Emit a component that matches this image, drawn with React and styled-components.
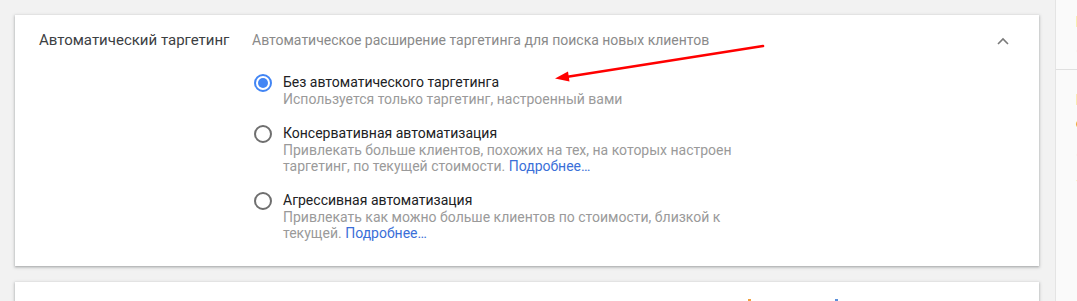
import React, { useState } from "react";
import styled, { createGlobalStyle } from "styled-components";

const GlobalStyle = createGlobalStyle`
  html, body {
    margin: 0;
    padding: 0;
    background: #f2f2f2;
    overflow: hidden;
    font-family: Roboto, "Liberation Sans", Arial, sans-serif;
  }
`;

const Page = styled.div`
  display: flex;
  height: 301px;
  width: 1077px;
`;

const Main = styled.main`
  width: 1055px;
  flex: none;
  box-sizing: border-box;
  padding: 15px 16px 0 15px;
  display: flex;
  flex-direction: column;
  gap: 16px;
`;

const Card = styled.section`
  position: relative;
  background: #fff;
  box-shadow: 0 1px 2px rgba(60, 64, 67, 0.3), 0 1px 3px 1px rgba(60, 64, 67, 0.15);
`;

const Section = styled.div`
  display: grid;
  grid-template-columns: 213px 1fr auto;
  padding: 15px 30px 25px 24px;
`;

const Title = styled.h2`
  margin: 0;
  font-size: 15px;
  line-height: 20px;
  font-weight: 400;
  color: #3c4043;
`;

const Body = styled.div`
  display: flex;
  flex-direction: column;
`;

const Subtitle = styled.p`
  margin: 0;
  font-size: 14px;
  line-height: 20px;
  color: #8a8a8a;
`;

const Options = styled.div`
  margin-top: 24px;
  display: flex;
  flex-direction: column;
  gap: 18px;
  padding-left: 2px;
`;

const Option = styled.label`
  display: flex;
  align-items: flex-start;
  gap: 11px;
  cursor: pointer;
`;

const Radio = styled.span`
  flex: none;
  width: 18px;
  height: 18px;
  box-sizing: border-box;
  border-radius: 50%;
  border: 2px solid ${({ $checked }) => ($checked ? "#4285f4" : "#6f6f6f")};
  display: flex;
  align-items: center;
  justify-content: center;

  &::after {
    content: "";
    width: 10px;
    height: 10px;
    border-radius: 50%;
    background: #4285f4;
    display: ${({ $checked }) => ($checked ? "block" : "none")};
  }
`;

const OptionText = styled.div`
  max-width: 482px;
`;

const OptionLabel = styled.div`
  font-size: 14px;
  line-height: 17px;
  color: #202124;
`;

const OptionHint = styled.div`
  font-size: 14px;
  line-height: 16px;
  color: #9a9a9a;
`;

const MoreLink = styled.a`
  color: #3b6fd8;
  text-decoration: none;
`;

const Collapse = styled.button`
  border: 0;
  background: none;
  padding: 0;
  margin-top: 7px;
  width: 12px;
  height: 8px;
  display: flex;
  cursor: pointer;
`;

// red annotation arrow drawn over the card
const Arrow = styled.svg`
  position: absolute;
  left: 525px;
  top: 10px;
  pointer-events: none;
`;

const NextCard = styled(Card)`
  height: 40px;
  display: flex;
  gap: 84px;
  padding: 17px 0 0 733px;
  box-sizing: border-box;
`;

const Mark = styled.span`
  width: 3px;
  height: 6px;
  background: ${({ $color }) => $color};
`;

const Sidebar = styled.aside`
  flex: 1;
  overflow: hidden;
  background: #fafafa;
  border-left: 1px solid #e4e4e4;
`;

const SideBlock = styled.div`
  height: ${({ $h }) => $h}px;
  box-sizing: border-box;
  padding: ${({ $pt }) => $pt}px 0 0 20px;
  border-bottom: ${({ $line }) => ($line ? "1px solid #e0e0e0" : "0")};
  display: flex;
  flex-direction: column;
  gap: ${({ $gap }) => $gap}px;
`;

const SideText = styled.span`
  font-size: 14px;
  line-height: ${({ $lh }) => $lh || 14}px;
  white-space: nowrap;
  color: ${({ $color }) => $color};
  font-weight: ${({ $bold }) => ($bold ? 500 : 400)};
`;

const options = [
  {
    id: "none",
    label: "Без автоматического таргетинга",
    hint: "Используется только таргетинг, настроенный вами",
  },
  {
    id: "conservative",
    label: "Консервативная автоматизация",
    hint: "Привлекать больше клиентов, похожих на тех, на которых настроен таргетинг, по текущей стоимости.",
    more: true,
  },
  {
    id: "aggressive",
    label: "Агрессивная автоматизация",
    hint: "Привлекать как можно больше клиентов по стоимости, близкой к текущей.",
    more: true,
  },
];

export default function App() {
  const [value, setValue] = useState("none");

  return (
    <>
      <GlobalStyle />
      <Page>
        <Main>
          <Card>
            <Section>
              <Title>Автоматический таргетинг</Title>
              <Body>
                <Subtitle>Автоматическое расширение таргетинга для поиска новых клиентов</Subtitle>
                <Options>
                  {options.map((o) => (
                    <Option key={o.id} onClick={() => setValue(o.id)}>
                      <Radio $checked={value === o.id} />
                      <OptionText>
                        <OptionLabel>{o.label}</OptionLabel>
                        <OptionHint>
                          {o.hint}
                          {o.more && (
                            <>
                              {" "}
                              <MoreLink href="#">Подробнее…</MoreLink>
                            </>
                          )}
                        </OptionHint>
                      </OptionText>
                    </Option>
                  ))}
                </Options>
              </Body>
              <Collapse aria-label="Свернуть">
                <svg width="12" height="8" viewBox="0 0 12 8">
                  <path d="M1 7 L6 2 L11 7" fill="none" stroke="#7a7a7a" strokeWidth="1.6" />
                </svg>
              </Collapse>
            </Section>
            <Arrow width="240" height="70" viewBox="0 0 240 70">
              <line x1="223" y1="21" x2="26" y2="52" stroke="#f00" strokeWidth="2.6" strokeLinecap="round" />
              <path d="M15 53.5 L28 46.5 L29.5 56.5 Z" fill="#f00" />
            </Arrow>
          </Card>
          <NextCard>
            <Mark $color="#f0a040" />
            <Mark $color="#5b8fd9" />
          </NextCard>
        </Main>
        <Sidebar>
          <SideBlock $h={70} $pt={15} $gap={14} $line>
            <SideText $color="#e9a640" $bold>Бюджет</SideText>
            <SideText $color="#7d6bc9">●</SideText>
          </SideBlock>
          <SideBlock $h={231} $pt={23} $gap={9}>
            <SideText $color="#c8621e" $bold>Ключевые</SideText>
            <SideText $color="#c8621e" $bold>слова</SideText>
            <SideText $color="#7d6bc9" $lh={30}>●</SideText>
            <SideText $color="#555" $lh={6}>–</SideText>
          </SideBlock>
        </Sidebar>
      </Page>
    </>
  );
}
